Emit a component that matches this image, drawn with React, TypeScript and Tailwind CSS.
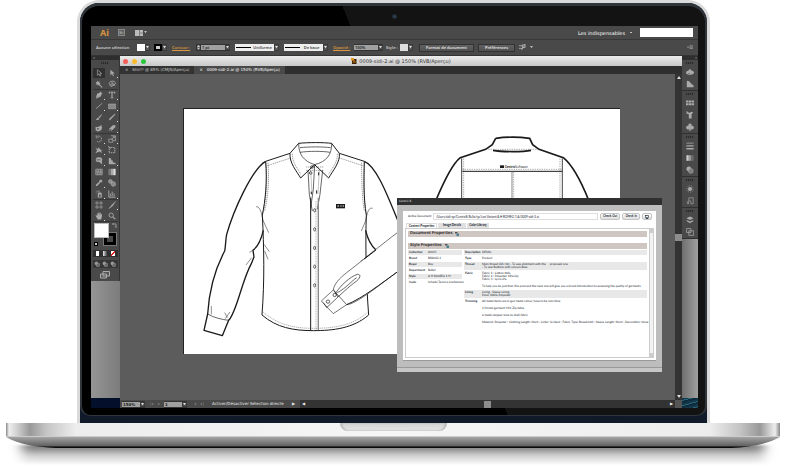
import type { ReactNode } from 'react';
import { Monitor } from 'lucide-react';

type IconDef = { name: string; art: ReactNode; sub?: boolean; active?: boolean };

const toolGroups: IconDef[][] = [
  [
    { name: 'Sélection', active: true, art: <path d="M3 1v7l2-2 1.2 3 1-.5L6 5.700h2.500z" fill="none" stroke="currentColor" strokeWidth=".8" /> },
    { name: 'Sélection directe', sub: true, art: <path d="M3 1v7l2-2 1.200 3 1.200-.500L6 5.700h2.500z" /> },
    { name: 'Baguette magique', art: <path d="M3.500.5l.8 1.900 2-.6-1 1.700 1.500 1.200-.9.500L9.500 9l-1 .6-4-3.800-.8 1.400-.8-1.800-2 .4L2 3.900.6 2.500l2 .1z" /> },
    { name: 'Lasso', art: <path d="M4 6C1 6 .8 4 2.500 2.500S8 1 9 3 8 6.500 6 6M3 6c-1 1 0 2 1.500 2M5 3v5l1.500-1.500h2z" fill="none" stroke="currentColor" strokeWidth="1.100" /> },
  ],
  [
    { name: 'Plume', sub: true, art: <path d="M6.500.5l3 3-1.500.7-.5 2.300L2 9.300 1 9l3.500-3.500L.8 8.500 3 3l2.500-.6z" /> },
    { name: 'Texte', sub: true, art: <path d="M1 1h8v2.400h-.8L7.500 2H5.700v6.200l1.300.3V9H3v-.5l1.300-.3V2H2.500l-.7 1.400H1z" /> },
    { name: 'Trait', sub: true, art: <path d="M1 8.500L9 1.500" stroke="currentColor" /> },
    { name: 'Rectangle', sub: true, art: <path d="M.5 2.500h9v6h-9z" fill="#888" stroke="currentColor" strokeWidth=".7" /> },
    { name: 'Pinceau', art: <path d="M9.500.5L4.500 5 6 6.300zM4 5.500L5.500 7c-.5 2-3 2-5 1.800C2.500 8 2 6 4 5.500z" /> },
    { name: 'Crayon', sub: true, art: <path d="M8.500.8l.9.9-6 6.500L1 9.300l.8-2.400z" /> },
    { name: 'Forme de tache', art: <path d="M.5 4l4-.5L9 .8 7.500 3l1.500.5-1 4-4 2-3-1.500zM2.500 5.300v1.200l1.500.8 1.500-1.800z" fillRule="evenodd" /> },
    { name: 'Gomme', sub: true, art: <path d="M6 1.500h3.500L9 4 4.500 8.500H1L1.500 6zM1.800 6.500h2.500L4 8H1.500z" fillRule="evenodd" /> },
  ],
  [
    { name: 'Rotation', sub: true, art: <path d="M2 2.500c3-3 7 0 6 3.500S3 9 2 7.500M1.500.5v3h3" fill="none" stroke="currentColor" strokeDasharray="1.800 .6" /> },
    { name: 'Mise à l’échelle', sub: true, art: <path d="M3.500 1h6v6h-3M1 5h5v4H1zM4 6l4-4M6 2h2v2" fill="none" stroke="currentColor" strokeWidth=".9" /> },
    { name: 'Largeur', sub: true, art: <path d="M.5 1l2.500 3L5 1.500 6 4l3.500 1.500L7.500 6l1 3L5.500 7 .5 9l2-3.500z" /> },
    { name: 'Transformation manuelle', art: <path d="M1.500 2h7v6.500h-7z M.5.500l3.500 3" fill="none" stroke="currentColor" strokeWidth="1.300" strokeDasharray="1.500 .9" /> },
    { name: 'Concepteur de forme', sub: true, art: <path d="M5 .5A3 3 0 1 0 3 6.300L5 6l4 3.500L8.500 5A3 3 0 0 0 5 .5zM2 3h5v1H2z" fillRule="evenodd" /> },
    { name: 'Grille de perspective', sub: true, art: <path d="M1 1l3 1v2l2 .5v2l3.500 1V9H1z" /> },
    { name: 'Filet', art: <path d="M1 1.500h8v7H1zM1 5c3-2 5 2 8 0M3.500 1.500c2 2-1 5 0 7M6.500 1.500c2 2-1 5 0 7" fill="#666" stroke="currentColor" strokeWidth=".9" /> },
    { name: 'Dégradé', art: <><path d="M.5 1h3v8h-3z" fill="#777" /><path d="M3.500 1h3v8h-3z" fill="#aaa" /><path d="M6.500 1h3v8h-3z" fill="#ddd" /></> },
    { name: 'Pipette', sub: true, art: <path d="M7.500.5L9.500 2.500 7.800 4.500 7 4 3 8.500 1 9l.4-2L5.700 3 5 2.200z" /> },
    { name: 'Dégradé de formes', art: <><circle cx="3" cy="3" r="2.300" fill="#888" stroke="currentColor" strokeWidth=".9" /><path d="M4.500 3.500h2A2.800 2.800 0 1 1 4 7z" fill="#888" stroke="currentColor" strokeWidth=".9" /></> },
    { name: 'Pulvérisation', sub: true, art: <path d="M1 1h1v1H1zm2 0h3v1H3zM1 3h1v1H1zm3 0h3.500l1 1.500v5h-5v-5zM5 5.500v3h2v-3z" fillRule="evenodd" /> },
    { name: 'Graphe', sub: true, art: <path d="M1 .5v8.500h8.500M3 8V4.500M5.200 8V2M7.500 8V4" fill="none" stroke="currentColor" strokeWidth="1.100" /> },
  ],
  [
    { name: 'Plan de travail', art: <path d="M2.500 0v10M7.500 0v10M0 2.500h10M0 7.500h10" stroke="currentColor" strokeWidth=".8" fill="none" /> },
    { name: 'Tranche', sub: true, art: <path d="M9.500.5L4 5.500 5.500 6.500zM4 6L1 9.500 5 7z" stroke="currentColor" strokeWidth=".5" /> },
    { name: 'Main', sub: true, art: <path d="M.5 4.500L2 4l.8 1V1.500h1V4l.5-3.500h1.200V4l.6-3h1.100v3l.6-1.500h1L8.500 7l-1 2.500h-4z" /> },
    { name: 'Zoom', art: <><circle cx="4" cy="4" r="2.700" fill="none" stroke="currentColor" strokeWidth="1.100" /><path d="M6 6l3 3" stroke="currentColor" strokeWidth="1.500" /></> },
  ],
];

const dockGroups: IconDef[][] = [
  [
    { name: 'Couleur', art: <path d="M0 6c0-2 2-3 3-2.500C3.500 1 6.500 1 7 3.500c2 0 3 1 3 2.500S7.500 8.500 5 8.500 0 8 0 6zm3 .2h1.500v1H3z" fillRule="evenodd" /> },
    { name: 'Guide des couleurs', art: <path d="M1 1l3 .5L6 4l3.500 3V9H1z" /> },
  ],
  [
    { name: 'Nuancier', art: <path d="M0 2h3v2.500H0zm3.500 0h3v2.500h-3zM7 2h3v2.500H7zM0 5.200h3v2.500H0zm3.500 0h3v2.500h-3zm3.500 0h3v2.500H7z" /> },
    { name: 'Formes', art: <path d="M1 0l3 2.500L6.500 1 9 2 7 4 5.500 4.200H7V9.500H3.500V4L.5 3z" /> },
    { name: 'Symboles', art: <path d="M5 .5a2 2 0 0 1 1.800 3A2.300 2.300 0 1 1 5.600 7L6.500 9.500h-3L4.400 7a2.300 2.300 0 1 1-1.200-3.500A2 2 0 0 1 5 .5z" /> },
  ],
  [
    { name: 'Contour', art: <path d="M.5 1h9v1h-9zm0 3h9v1.500h-9zm0 3.500h9v2h-9z" /> },
    { name: 'Dégradé', art: <><path d="M.5 1.500h3v7h-3z" fill="#ccc" /><path d="M3.500 1.500h3v7h-3z" fill="#999" /><path d="M6.500 1.500h3v7h-3z" fill="#6d6d6d" /></> },
    { name: 'Transparence', art: <><circle cx="3.500" cy="3.700" r="3" /><circle cx="6" cy="6.200" r="3" fill="#7d7d7d" stroke="currentColor" strokeWidth=".7" /></> },
  ],
  [
    { name: 'Aspect', art: <><circle cx="5" cy="5" r="2.600" /><circle cx="5" cy="5" r="4" fill="none" stroke="currentColor" strokeDasharray="1 1.500" /></> },
    { name: 'Styles graphiques', art: <path d="M3.500 1H9v7.500H6V5H3.500zM3 5.500a1.600 1.600 0 1 0 .1 3.200z" fill="none" stroke="currentColor" strokeWidth=".8" /> },
  ],
  [
    { name: 'Calques', art: <path d="M5 .5l4.500 2.300L5 5 .5 2.800zM1 5l4 2 4-2v1.700L5 9.200 1 6.700z" /> },
    { name: 'Plans de travail', art: <path d="M.7.7h5.500v5H.7zM3.500 3.500h6v5.700h-6z" fill="#4a4a4a" stroke="currentColor" strokeWidth=".9" /> },
  ],
];

const leftProps = [
  ['Collection', 'AW15'],
  ['Brand', 'BRAND 1'],
  ['Buyer', 'Boy'],
  ['Department', 'Ballet'],
  ['Style', 'A H ROMEO 1 H'],
  ['Code', 'Scheda Tecnica Confezione'],
];

// an empty string is a blank line between paragraphs
const rightProps: [string, string[]][] = [
  ['Description', ['DEMO']],
  ['Type', ['Product']],
  ['Thread', ['Main thread (DK/30) - To sew allotment with the \u00a0 \u00a0 proposed one', '- To sew Buttons with colours Blue']],
  ['Fabric', ['Fabric 1 : Cotton 80%', 'Fabric 2 : Polyester 18% Op', 'Fabric 3 : Lycra 2%', '', 'To help you do just that, this post and the next one will give you a broad introduction to assessing the quality of garments']],
  ['Lining', ['Lining : Sleeve Lining', 'Pane: 100% Polyester']],
  ['Trimming', ['All metal items are in gun metal colour, have to be not shine', '', '1 frontal garment YKK Zip-table', '', '2 metal stopper tone to shell fabric', '', 'Material: Polyester ; Clothing Length: Short ; Collar: O-Neck ; Fabric Type: Broadcloth ; Sleeve Length: Short ; Decoration: None']],
];

const Icon = ({ children }: { children: ReactNode }) => (
  <svg viewBox="0 0 10 10" className="size-2 shrink-0 text-[#aaa]" fill="currentColor">
    {children}
  </svg>
);

const Arrow = () => (
  <span className="pointer-events-none flex w-[5px] shrink-0 items-center justify-center border border-[#3b3b3b] bg-[#555] text-[#ddd]">
    <svg viewBox="0 0 4 3" className="w-[3px]" fill="currentColor"><path d="M0 0h4L2 3z" /></svg>
  </span>
);

const Grip = () => <span className="h-[2px] w-2 bg-[repeating-linear-gradient(90deg,#2a2a2a_0_1px,#444_1px_2px)]" />;

const Field = ({ label, value, width }: { label: string; value: string; width: string }) => (
  <span className="flex h-[7px] border-y border-[#333] bg-[#a0a0a0]">
    <input aria-label={label} defaultValue={value} className={`${width} px-px text-[4px] leading-[5px] font-semibold text-[#222] outline-none`} />
    <Arrow />
  </span>
);

const StrokeSelect = ({ label, value }: { label: string; value: string }) => (
  <span className="ml-[5px] flex h-[7px] w-[44px] bg-[#eee]">
    <span className="flex w-4 shrink-0 items-center pl-px"><span className="h-px w-full bg-black" /></span>
    <select aria-label={label} className="min-w-0 flex-1 appearance-none text-center text-[4px] leading-[7px] font-semibold text-[#444]">
      <option>{value}</option>
    </select>
    <Arrow />
  </span>
);

const BarButton = ({ children }: { children: ReactNode }) => (
  <button className="h-2 border border-[#333] bg-linear-to-b from-[#626262] to-[#505050] px-[6px] text-[4px] leading-[6px] font-semibold whitespace-nowrap text-[#e4e4e4]">
    {children}
  </button>
);

const MenuBar = () => (
  <header className="flex h-[14px] items-center border-b border-[#383838] bg-[#494949] px-[5px]">
    <span className="ml-1 w-[10px] text-[9px] leading-[12px] font-bold text-[#d9953f]">Ai</span>
    <button aria-label="Bridge" className="ml-2 flex size-[7px] items-center justify-center border border-[#888] bg-[#606060] text-[4px] leading-[5px] text-[#bbb]">Br</button>
    <button aria-label="Disposition" className="ml-[10px] flex items-center gap-px text-[#bbb]">
      <svg viewBox="0 0 8 6" className="w-2" fill="currentColor"><path d="M0 0h4.500v6H0zM5 0h3v2.700H5zM5 3.300h3V6H5z" /></svg>
      <svg viewBox="0 0 4 3" className="w-[3px]" fill="currentColor"><path d="M0 0h4L2 3z" /></svg>
    </button>
    <div className="ml-auto flex items-center gap-2">
      <button className="flex items-center gap-[5px] font-['DejaVu_Sans'] text-[5px] leading-[8px] text-white">
        Les indispensables
        <svg viewBox="0 0 4 3" className="w-[2px]" fill="currentColor"><path d="M0 0h4L2 3z" /></svg>
      </button>
      <input aria-label="Rechercher" className="h-[9px] w-[53px] bg-white px-px text-[5px] outline-none" />
    </div>
  </header>
);

const ControlBar = () => (
  <div className="flex h-[15px] items-center bg-[#494949] pr-[5px] pl-[5px] text-[4px] leading-[7px] font-semibold whitespace-nowrap text-[#d0d0d0]">
    <span className="w-[41px]">Aucune sélection</span>
    <button aria-label="Fond" className="flex h-[7px]"><span className="w-2 bg-white" /><Arrow /></button>
    <button aria-label="Couleur du contour" className="ml-1 flex h-[7px]">
      <span className="w-2 border-2 border-black bg-[#ccc]" /><Arrow />
    </button>
    <button className="ml-[5px] w-6 text-left text-[#d9953f] underline">Contour :</button>
    <button aria-label="Épaisseur" className="flex h-[7px] w-[5px] flex-col items-center justify-center gap-px border border-[#333] bg-[#555]">
      <svg viewBox="0 0 4 6" className="w-[3px]" fill="#ccc"><path d="M0 2.500L2 0l2 2.500zM0 3.500h4L2 6z" /></svg>
    </button>
    <Field label="Contour" value="1 pt" width="w-6" />
    <StrokeSelect label="Profil" value="Uniforme" />
    <StrokeSelect label="Pinceau" value="De base" />
    <button className="ml-[5px] w-[21px] text-left text-[#d9953f] underline">Opacité :</button>
    <Field label="Opacité" value="100%" width="w-6" />
    <span className="ml-[3px] w-[14px]">Style :</span>
    <button aria-label="Style" className="flex h-[7px]"><span className="w-2 bg-[#ddd]" /><Arrow /></button>
    <div className="ml-[6px] flex items-center gap-1">
      <BarButton>Format de document</BarButton>
      <BarButton>Préférences</BarButton>
      <button aria-label="Aligner" className="flex items-center gap-1 text-[#bbb]">
        <svg viewBox="0 0 8 7" className="w-[7px]" fill="none" stroke="currentColor"><path d="M0 2h4M0 5h4M4 1h3v3H4zM7 0L3 7" strokeWidth=".9" /></svg>
        <svg viewBox="0 0 4 3" className="w-[3px]" fill="currentColor"><path d="M0 0h4L2 3z" /></svg>
      </button>
    </div>
    <button aria-label="Menu du panneau" className="ml-auto">
      <svg viewBox="0 0 7 5" className="w-[6px]" stroke="#aaa" fill="none"><path d="M0 2.500h3M3 1h4M3 2.500h4M3 4h4" strokeWidth=".8" /></svg>
    </button>
  </div>
);

const Toolbox = () => (
  <aside className="flex w-[29px] shrink-0 flex-col bg-linear-to-r from-[#959595] to-[#7c7c7c]">
    <div className="flex flex-col items-center border-r border-[#333] bg-[#494949] pb-[2px]">
      <div className="mb-[2px] h-1 w-full bg-[#2e2e2e] pl-[2px] text-[4px] leading-[4px] text-[#bbb]">«</div>
      <Grip />
      <div className="mt-1 px-px">
        {toolGroups.map((group, i) => (
          <div key={i} className="grid grid-cols-2 gap-px border-b border-[#363636]">
            {group.map((tool) => (
              <button
                key={tool.name}
                aria-label={tool.name}
                className={`relative flex h-[10px] w-3 items-center justify-center ${tool.active ? 'bg-[#303030]' : ''}`}
              >
                <Icon>{tool.art}</Icon>
                {tool.sub && <span className="absolute right-0 bottom-0 size-px bg-[#ddd]" />}
              </button>
            ))}
          </div>
        ))}
      </div>
      {/* Fill and stroke swatches */}
      <div className="relative mt-px h-[23px] w-[23px]">
        <span className="absolute right-0 bottom-0 size-[14px] border-4 border-black bg-[#494949] outline -outline-offset-1 outline-[#777]" />
        <span className="absolute top-0 left-0 size-[15px] border border-[#bbb] bg-white" />
        <svg viewBox="0 0 10 10" className="absolute top-0 right-0 w-[5px]" fill="none" stroke="#aaa" strokeWidth="1.500"><path d="M1 2h7v7M3 0L1 2l2 2M6 7l2 2 2-2" /></svg>
        <span className="absolute bottom-0 left-0 size-1 border border-black bg-[#ccc]" />
      </div>
      <div className="mt-1 flex h-[7px] w-[25px] bg-[#303030] p-px">
        <button aria-label="Couleur" className="mx-[2px] w-[5px] bg-white" />
        <button aria-label="Dégradé" className="mx-[2px] w-[5px] bg-linear-to-r from-[#eee] to-[#444]" />
        <button aria-label="Sans" className="mx-[2px] w-[5px] bg-[linear-gradient(135deg,#fff_38%,#e02020_38%_62%,#fff_62%)]" />
      </div>
      <div className="mt-[3px] flex h-[8px] w-[25px] items-center justify-around bg-[#363636]">
        {['Dessin normal', 'Dessin arrière', 'Dessin intérieur'].map((mode) => (
          <button key={mode} aria-label={mode}>
            <svg viewBox="0 0 10 10" className="w-[6px]"><circle cx="4" cy="4" r="3" fill="#999" /><path d="M4 4h5v5H4z" fill="#6a6a6a" stroke="#aaa" strokeWidth=".7" /></svg>
          </button>
        ))}
      </div>
      <button aria-label="Mode d’écran" className="mt-[3px]">
        <svg viewBox="0 0 10 8" className="w-[10px]" fill="#555" stroke="#b4b4b4" strokeWidth=".9"><path d="M3 .5h6.500v4.500H3zM.5 3h6v4h-6z" /></svg>
      </button>
    </div>
    <div className="mt-auto h-[10px] bg-[#04102b]" />
  </aside>
);

const Dock = () => (
  <aside className="flex w-4 shrink-0 flex-col bg-linear-to-r from-[#6f6f6f] to-[#a0a0a0]">
    <div className="bg-[#494949]">
      <div className="h-1 bg-[#2e2e2e] pr-px text-right text-[4px] leading-[4px] text-[#bbb]">»</div>
      {dockGroups.map((group, i) => (
        <div key={i} className="flex flex-col items-center gap-1 border-b border-[#303030] pt-[2px] pb-[2px]">
          <Grip />
          {group.map((panel) => (
            <button key={panel.name} aria-label={panel.name}><Icon>{panel.art}</Icon></button>
          ))}
        </div>
      ))}
    </div>
    <div className="mt-auto h-[10px] bg-[repeating-linear-gradient(165deg,#12384a_0_2px,#2a6478_2px_3px,#0e2c3e_3px_5px)]" />
  </aside>
);

const FrontShirt = () => (
  <g transform="translate(-4 22) scale(.3333)" fill="none" stroke="#1a1a1a" strokeWidth="3" strokeLinejoin="round">
    {/* sleeves */}
    <path d="M257 91C215 115 160 240 140 310C136 330 137 350 134 360C110 405 88 470 83 549L72 598L127 614L146 568C170 545 185 450 214 398L222 378L219 358C236 345 246 315 250 298" fill="#fff" strokeWidth="4" />
    <path d="M83 549C100 560 128 566 146 568" strokeWidth="2" />
    <path d="M94 525v25M134 545l8 15M150 543l-14 20" strokeWidth="1.500" />
    <path d="M553 91C590 105 625 200 656 275M557 298C563 325 575 345 588 357L553 384" strokeWidth="4" />
    {/* body */}
    <path d="M330 67L257 91C262 150 256 210 247 252C252 350 254 450 246 552C290 590 340 599 400 599S520 592 566 552C558 450 556 330 559 252C550 200 552 140 553 91L478 67" />
    <path d="M250 544C295 582 345 592 400 592S515 586 562 545" strokeWidth="1" strokeDasharray="4 2" />
    <path d="M257 95C264 150 258 210 248 250M264 95C268 150 264 200 254 240M553 95C550 150 552 210 559 250M545 95C545 150 546 200 553 240M262 104L335 80M548 104L476 80" strokeWidth="1.200" strokeDasharray="4 2" />
    <path d="M228 227C244 225 246 260 250 270L266 305M578 232C563 225 560 260 556 272L544 300M219 358L208 364M215 380L198 402M252 340L268 362M254 360L264 385M553 384L542 390" strokeWidth="1.500" />
    {/* collar */}
    <path d="M356 37C385 34 430 34 455 37L478 67C482 92 458 120 446 141L404 101L362 141C348 118 328 95 330 67Z" fill="#fff" />
    <path d="M360 50C385 47 430 47 452 50M360 64C385 60 430 60 450 64M356 37C356 70 370 90 404 101C440 92 456 70 455 37" strokeWidth="2" />
    <path d="M337 68C336 92 352 112 363 130M472 68C474 92 456 112 446 130M378 108h52M378 118h52" strokeWidth="1.200" strokeDasharray="4 2" />
    {/* placket */}
    <path d="M384 118L388 190L397 240M428 118L420 190L412 235M404 101L400 175L392 230" strokeWidth="2" />
    <path d="M392 118l4 70M418 118l-4 70" strokeWidth="1.200" strokeDasharray="4 2" />
    <path d="M392 200v398" />
    <path d="M415 200v398" stroke="#888" strokeWidth="4" />
    <path d="M408 210v388" strokeWidth="1" strokeDasharray="3 2" />
    {[238, 295, 351, 407, 463].map((y) => (
      <ellipse key={y} cx="404" cy={y} rx="3" ry="5" strokeWidth="2" fill="#fff" />
    ))}
    <circle cx="396" cy="108" r="4" strokeWidth="2" />
    <circle cx="392" cy="126" r="4" strokeWidth="2" />
    <path d="M416 124v9M410 178v10M394 182v8" />
    {/* folded sleeve */}
    <path d="M656 302C605 340 540 395 500 425C478 442 462 460 460 477L424 510L460 548L500 521C530 520 600 460 656 420" fill="#fff" strokeWidth="1.800" />
    <path d="M500 521C550 500 600 460 656 420M588 357L553 384" />
    <path d="M460 477L500 521M466 488C480 465 510 437 532 430C545 430 540 442 530 450C505 468 488 485 440 530L430 515M462 478L474 498M472 485C500 470 515 450 530 440" strokeWidth="2" />
    <circle cx="464" cy="492" r="5" strokeWidth="2" />
    <circle cx="444" cy="512" r="5" strokeWidth="2" />
    {/* chest label */}
    <path d="M468 219h27v13h-27z" fill="#1a1a1a" stroke="none" />
    <path d="M472 225h5m4 0h4m3 0h4" stroke="#fff" strokeWidth="3" />
  </g>
);

const BackShirt = () => (
  <g transform="translate(211 17) scale(.3333)" fill="none" stroke="#1a1a1a" strokeWidth="5">
    <path d="M302 37C330 33 375 33 404 37L413 56L432 70L505 95C530 115 560 170 582 225M302 37L292 56L272 70L196 95C170 115 145 170 122 225" />
    <path d="M294 73C320 78 385 78 408 73" />
    <path d="M280 70h150M202 130h300M206 98v120M495 98v120M356 138v80" strokeWidth="1.500" strokeDasharray="4 3" stroke="#555" />
    <path d="M200 97v122M502 97v122" strokeWidth="3" stroke="#444" />
    <path d="M202 136h300" strokeWidth="3" />
    <path d="M351 137v82" stroke="#888" strokeWidth="3" />
    <path d="M315 118h12v8h-12z" fill="#1a1a1a" stroke="none" />
    <text x="329" y="126" fontSize="9" fill="#222" stroke="none"><tspan fontWeight="700">Centric</tspan>Software</text>
  </g>
);

const SectionTitle = ({ children }: { children: ReactNode }) => (
  <h2 className="flex h-[6px] items-center gap-[3px] bg-[#d0c6c1] px-[2px] font-['Noto_Sans'] text-[4px] leading-[6px] font-bold text-[#333]">
    {children}
    <svg viewBox="0 0 8 8" className="w-1"><path d="M0 0h5v3H0z" fill="#555" /><path d="M3 3h5v5H3z" fill="#4a7f91" /></svg>
  </h2>
);

const DialogButton = ({ children }: { children: ReactNode }) => (
  <button className="h-[7px] rounded-xs border border-[#c4c4c4] bg-linear-to-b from-white to-[#ddd] px-[2px] text-[3px] leading-[5px] font-bold whitespace-nowrap text-[#1d2b35]">
    {children}
  </button>
);

const PropertiesDialog = () => (
  <section className="absolute top-[124px] left-[277px] w-[265px] bg-[#bdbdbd] font-['Lato','Noto_Sans',sans-serif] text-[3px] leading-[3px] text-[#14212b] [text-rendering:geometricPrecision]">
    <h1 className="h-[7px] bg-[#303030] px-[2px] text-[3px] leading-[7px] font-bold text-[#ccc]">Centric 8</h1>
    <div className="mx-[6px] mt-[6px] h-[150px] border-b border-[#999] bg-white px-[2px] pt-[2px]">
      <div className="flex items-center gap-[2px] pr-[2px] pl-[3px]">
        <label htmlFor="active-document" className="w-[23px] whitespace-nowrap">Active Document:</label>
        <input
          id="active-document"
          defaultValue="/Users/sidi-ap/Centric8/Bello/tp/Last Variant/A H ROMEO 1 A/0009-sidi-2.ai"
          className="h-[7px] min-w-0 flex-1 border border-[#ddd] px-[2px] text-[3px] outline-none"
        />
        <DialogButton>Check Out</DialogButton>
        <DialogButton>Check In</DialogButton>
        <DialogButton><Monitor className="size-1" strokeWidth={4} /></DialogButton>
      </div>
      <nav className="mt-[3px] flex gap-px px-px font-bold">
        <button className="h-[5px] w-[31px] border border-b-0 border-[#ddd] bg-white whitespace-nowrap">Content Properties</button>
        <button className="h-[5px] w-[28px] bg-[#e0e0e0] whitespace-nowrap">Image Details</button>
        <button className="h-[5px] w-[22px] bg-[#e0e0e0] whitespace-nowrap">Color Library</button>
      </nav>
      <div className="flex h-[130px] border border-[#ccc]">
        <div className="min-w-0 flex-1 px-[2px] pt-[2px]">
          <SectionTitle>Document Properties</SectionTitle>
          <div className="mt-[6px]"><SectionTitle>Style Properties</SectionTitle></div>
          <div className="flex items-start gap-[2px]">
            <table className="w-[54px] shrink-0 table-fixed border-separate border-spacing-x-0 border-spacing-y-px">
              <tbody>
                {leftProps.map(([label, value]) => (
                  <tr key={label} className="odd:bg-[#e8e8e8]">
                    <th scope="row" className="w-5 px-px py-px text-left font-bold">{label}</th>
                    <td className="py-px whitespace-nowrap">{value}</td>
                  </tr>
                ))}
              </tbody>
            </table>
            <div className="min-w-0 flex-1">
              <table className="w-full table-fixed border-separate border-spacing-x-0 border-spacing-y-px">
                <tbody>
                  {rightProps.map(([label, lines]) => (
                    <tr key={label} className="align-top odd:bg-[#e8e8e8]">
                      <th scope="row" className="w-[18px] px-px py-px text-left font-bold">{label}</th>
                      <td className="py-px whitespace-nowrap">
                        {lines.map((line, i) => <p key={i} className={line ? '' : 'h-1'}>{line}</p>)}
                      </td>
                    </tr>
                  ))}
                </tbody>
              </table>
            </div>
          </div>
        </div>
        <div className="flex w-1 flex-col justify-between border-l border-[#ccc] bg-[#f2f2f2]">
          <span className="h-1 bg-[#ccc]" />
          <span className="h-1 bg-[#ccc]" />
        </div>
      </div>
    </div>
    <div className="mt-[6px] h-[5px] border-t border-[#999] bg-[#c6c6c6]" />
  </section>
);

const DocumentTab = ({ children, active }: { children: ReactNode; active?: boolean }) => (
  <button className={`flex items-center gap-[4px] px-[5px] font-['DejaVu_Sans'] text-[4px] whitespace-nowrap ${active ? 'bg-[#494949] text-white' : 'bg-[#333] text-[#c8c8c8]'}`}>
    <span>×</span>{children}
  </button>
);

const DocumentWindow = () => (
  <main className="flex min-w-0 flex-1 flex-col">
    <div className="flex h-[10px] items-center bg-linear-to-b from-[#ececec] to-[#c9c9c9] px-[3px]">
      <div className="flex w-6 gap-1">
        <span className="size-[5px] rounded-full bg-[#f55f57]" />
        <span className="size-[5px] rounded-full bg-[#f9bc2e]" />
        <span className="size-[5px] rounded-full bg-[#2bc840]" />
      </div>
      <h1 className="flex flex-1 items-center justify-center gap-[2px] pr-6 font-['DejaVu_Sans'] text-[5px] leading-[10px] text-[#333]">
        <svg viewBox="0 0 12 12" className="w-[6px]"><path d="M2 2h9v10H2z" fill="#3b230b" /><path d="M0 0h6v5H0z" fill="#e8951d" /><path d="M4 10l2.500-6L9 10M5 8h3" fill="none" stroke="#e8951d" /></svg>
        0009-sidi-2.ai @ 150% (RVB/Aperçu)
      </h1>
    </div>
    <nav className="flex h-2 bg-[#2f2f2f]">
      <DocumentTab>Shirt* @ 85% (CMJN/Aperçu)</DocumentTab>
      <DocumentTab active>0009-sidi-2.ai @ 150% (RVB/Aperçu)</DocumentTab>
    </nav>
    <div className="flex h-[326px]">
      <div className="relative flex-1 overflow-hidden bg-[#5c5c5c]">
        <div className="absolute top-[34px] left-[63px] border-t border-l border-[#222] bg-white">
          <svg viewBox="0 0 436 245" className="h-[245px] w-[436px]">
            <FrontShirt />
            <BackShirt />
          </svg>
        </div>
        <PropertiesDialog />
      </div>
      <div className="flex w-[7px] flex-col items-center justify-between bg-[#333] py-[2px]">
        <svg viewBox="0 0 4 3" className="w-1" fill="#ddd"><path d="M0 3h4L2 0z" /></svg>
        <span className="size-[7px] bg-[#8d8d8d]" />
        <svg viewBox="0 0 4 3" className="w-1" fill="#ddd"><path d="M0 0h4L2 3z" /></svg>
      </div>
    </div>
    <footer className="flex h-2 items-center bg-[#4a4a4a] pl-[2px] font-['DejaVu_Sans'] text-[4px] leading-[6px] text-[#eee]">
      <Field label="Zoom" value="150%" width="w-[18px]" />
      <span className="flex w-[19px] justify-center gap-1 text-[#888]"><span>|◂</span><span>◂</span></span>
      <Field label="Plan de travail" value="1" width="w-[18px]" />
      <span className="flex w-[25px] justify-center gap-1 text-[#888]"><span>▸</span><span>▸|</span></span>
      <span className="w-[80px] whitespace-nowrap">Activer/Désactiver Sélection directe</span>
      <span className="w-2">▶</span>
      <div className="flex h-full flex-1 items-center justify-between bg-[#333] px-[2px]">
        <span>◀</span>
        <span className="size-[7px] bg-[#8d8d8d]" />
        <span>▶</span>
      </div>
      <span className="h-full w-[7px] bg-[#555]" />
    </footer>
  </main>
);

const LaptopBase = () => (
  <div className="mr-[7px] ml-[6px]">
    <div className="flex h-[14px] justify-center border-b border-[#ccc] bg-[linear-gradient(90deg,#888_0,#eee_3px,#d5d5d5_10px,#999_24px,#c4c4c4_40px,#ededed_70px,#f6f6f6_50%,#ededed_calc(100%-70px),#c4c4c4_calc(100%-40px),#999_calc(100%-20px),#eee_calc(100%-5px),#888_100%)]">
      <div className="h-2 w-[107px] rounded-b-lg bg-linear-to-b from-[#d2d2d2] to-[#e6e6e6] shadow-[inset_2px_0_2px_#bbb,inset_-2px_0_2px_#bbb]" />
    </div>
    <svg viewBox="0 0 774 32" preserveAspectRatio="none" className="block h-8 w-full">
      <defs>
        <linearGradient id="edge" x2="0" y2="1">
          <stop offset="0" stopColor="#a5a5a5" />
          <stop offset=".8" stopColor="#626262" />
          <stop offset=".9" stopColor="#111" />
          <stop offset="1" stopColor="#000" />
        </linearGradient>
        <linearGradient id="shade" x2="0" y2="1">
          <stop offset="0" stopColor="#777" />
          <stop offset=".25" stopColor="#999" />
          <stop offset=".5" stopColor="#ccc" />
          <stop offset="1" stopColor="#fff" />
        </linearGradient>
        <filter id="soft" x="-5%" width="110%"><feGaussianBlur stdDeviation="6 1" /></filter>
      </defs>
      <path d="M16 8h742v20H16z" fill="url(#shade)" filter="url(#soft)" />
      <path d="M0 0h774C762 7 745 10 725 11H50C28 10 12 7 0 0z" fill="url(#edge)" />
    </svg>
  </div>
);

export default function App() {
  return (
    <div className="min-h-screen overflow-hidden bg-white font-['Noto_Sans','Open_Sans',sans-serif]">
      <div className="mx-[77px] rounded-t-[22px] bg-[#dadada] px-[3px] pt-[3px]">
        <div className="rounded-t-[19px] bg-[#101a28] pb-[7px]">
          <div className="rounded-t-[19px] rounded-b-[10px] border-x-2 border-t-3 border-b border-[#30353b] bg-[linear-gradient(68deg,#000_0_54%,#131313_54%)] pr-[7px] pb-[7px] pl-[9px]">
            <div className="flex h-5 items-center justify-center">
              <span className="size-[5px] rounded-full border border-[#222b33] bg-[#2b3f54]" />
            </div>
            <MenuBar />
            <ControlBar />
            <div className="flex border-t border-[#333]">
              <Toolbox />
              <DocumentWindow />
              <Dock />
            </div>
          </div>
        </div>
      </div>
      <LaptopBase />
    </div>
  );
}
